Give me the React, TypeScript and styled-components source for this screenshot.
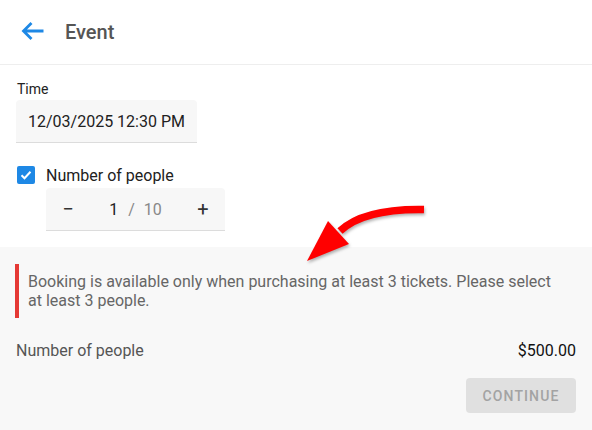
import React from 'react';
import styled, { createGlobalStyle } from 'styled-components';

const GlobalStyle = createGlobalStyle`
  html, body {
    margin: 0;
    padding: 0;
    background: #fff;
    font-family: Roboto, "Liberation Sans", Arial, sans-serif;
  }
`;

const Page = styled.div`
  position: relative;
  width: 592px;
  min-height: 430px;
  display: flex;
  flex-direction: column;
  color: #212121;
`;

/* header with back arrow */
const Header = styled.header`
  height: 64px;
  display: flex;
  align-items: center;
  padding-left: 20px;
  gap: 21px;
  border-bottom: 1px solid #eeeeee;
`;

const BackButton = styled.button`
  border: 0;
  padding: 0;
  background: none;
  display: flex;
  margin-top: -2px;
  cursor: pointer;
`;

const Title = styled.h1`
  margin: 0;
  font-size: 20px;
  font-weight: 500;
  color: #555;
`;

const Form = styled.div`
  padding: 16px 16px 16px;
  display: flex;
  flex-direction: column;
  align-items: flex-start;
`;

const Label = styled.label`
  font-size: 14px;
  line-height: 16px;
  margin: 0 0 3px 1px;
  color: #222;
`;

const InputBox = styled.div`
  height: 42px;
  display: flex;
  align-items: center;
  padding: 0 12px;
  background: #f7f7f7;
  border-bottom: 1px solid #dcdcdc;
  border-radius: 4px 4px 0 0;
  font-size: 16px;
  color: #212121;
`;

const CheckRow = styled.div`
  margin-top: 20px;
  height: 24px;
  display: flex;
  align-items: center;
  gap: 11px;
  padding-left: 1px;
`;

const Checkbox = styled.span<{ checked: boolean }>`
  width: 18px;
  height: 18px;
  border-radius: 2px;
  background: ${p => (p.checked ? '#1e88e5' : 'transparent')};
  border: ${p => (p.checked ? '0' : '2px solid #757575')};
  display: flex;
  align-items: center;
  justify-content: center;
`;

const CheckLabel = styled.span`
  font-size: 16px;
  color: #212121;
`;

const Stepper = styled.div`
  margin: 1px 0 0 30px;
  width: 179px;
  height: 43px;
  display: flex;
  align-items: center;
  padding: 0 4px;
  box-sizing: border-box;
  background: #f7f7f7;
  border-bottom: 1px solid #dcdcdc;
  border-radius: 4px 4px 0 0;
`;

const StepButton = styled.button`
  width: 36px;
  height: 36px;
  border: 0;
  background: none;
  padding: 0;
  font-family: inherit;
  font-size: 20px;
  color: #333;
  display: flex;
  align-items: center;
  justify-content: center;
  cursor: pointer;
`;

const Count = styled.div`
  flex: 1;
  display: flex;
  justify-content: center;
  font-size: 16px;
  color: #212121;
`;

const Slash = styled.span`
  color: #888;
  margin: 0 9px 0 10px;
`;

const Max = styled.span`
  color: #888;
`;

/* grey summary area */
const Summary = styled.section`
  flex: 1;
  background: #f8f8f8;
  padding: 17px 16px 17px;
  display: flex;
  flex-direction: column;
`;

const Notice = styled.p`
  margin: 0 0 0 -1px;
  border-left: 4px solid #e53935;
  padding: 8px 16px 8px 9px;
  font-size: 16px;
  line-height: 19px;
  color: #666;
`;

const TotalRow = styled.div`
  margin-top: 21px;
  display: flex;
  justify-content: space-between;
  font-size: 16px;
  line-height: 24px;
  color: #555;
`;

const Price = styled.span`
  color: #111;
`;

const Actions = styled.div`
  margin-top: 15px;
  display: flex;
  justify-content: flex-end;
`;

const ContinueButton = styled.button`
  height: 35px;
  width: 110px;
  border: 0;
  border-radius: 4px;
  background: #e0e0e0;
  color: #a3a3a3;
  font-family: inherit;
  font-size: 14px;
  font-weight: 500;
  letter-spacing: 1.1px;
  text-transform: uppercase;
`;

const Pointer = styled.svg`
  position: absolute;
  left: 300px;
  top: 200px;
  filter: drop-shadow(1px 2px 1.5px rgba(0, 0, 0, 0.3));
  pointer-events: none;
`;

const App: React.FC = () => {
  const people = 1;
  const maxPeople = 10;

  return (
    <>
      <GlobalStyle />
      <Page>
        <Header>
          <BackButton aria-label="Back">
            <svg width="24" height="20" viewBox="0 0 24 20">
              <path d="M23.5 10H3.5M11.5 2L3.5 10l8 8" fill="none" stroke="#1e88e5" strokeWidth="2.8" />
            </svg>
          </BackButton>
          <Title>Event</Title>
        </Header>

        <Form>
          <Label>Time</Label>
          <InputBox>12/03/2025 12:30 PM</InputBox>

          <CheckRow>
            <Checkbox checked>
              <svg width="12" height="10" viewBox="0 0 12 10">
                <path d="M1.5 5.2l3 3 6-6.5" fill="none" stroke="#fff" strokeWidth="2" />
              </svg>
            </Checkbox>
            <CheckLabel>Number of people</CheckLabel>
          </CheckRow>

          <Stepper>
            <StepButton>−</StepButton>
            <Count>
              <span>{people}</span>
              <Slash>/</Slash>
              <Max>{maxPeople}</Max>
            </Count>
            <StepButton>+</StepButton>
          </Stepper>
        </Form>

        <Summary>
          <Notice>
            Booking is available only when purchasing at least 3 tickets. Please select at least 3 people.
          </Notice>
          <TotalRow>
            <span>Number of people</span>
            <Price>$500.00</Price>
          </TotalRow>
          <Actions>
            <ContinueButton disabled>Continue</ContinueButton>
          </Actions>
        </Summary>

        <Pointer width="130" height="66" viewBox="0 0 130 66">
          <path d="M124 9.5C95 9 60 12 40 31" fill="none" stroke="#ff0000" strokeWidth="7.5" />
          <polygon points="28,21 49,44 7,61" fill="#ff0000" />
        </Pointer>
      </Page>
    </>
  );
};

export default App;
